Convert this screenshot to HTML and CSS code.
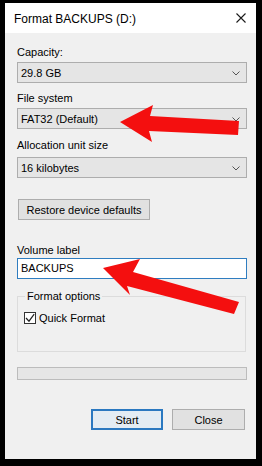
FILE: index.html
```html
<!DOCTYPE html>
<html>
<head>
<meta charset="utf-8">
<link rel="stylesheet" href="styles.css">
</head>
<body>
<div class="dialog">
  <div class="titlebar">
    <span class="title">Format BACKUPS (D:)</span>
    <svg class="close" width="10" height="10" viewBox="0 0 10 10"><path d="M0.5 0.5 L9.5 9.5 M9.5 0.5 L0.5 9.5" stroke="#1a1a1a" stroke-width="1.1" fill="none"/></svg>
  </div>
  <div class="content">
    <div class="label l-cap">Capacity:</div>
    <div class="combo"><span>29.8 GB</span><svg width="8" height="5" viewBox="0 0 8 5"><path d="M0.5 0.5 L4 4 L7.5 0.5" stroke="#555" fill="none"/></svg></div>
    <div class="label l-fs">File system</div>
    <div class="combo"><span>FAT32 (Default)</span><svg width="8" height="5" viewBox="0 0 8 5"><path d="M0.5 0.5 L4 4 L7.5 0.5" stroke="#555" fill="none"/></svg></div>
    <div class="label l-alloc">Allocation unit size</div>
    <div class="combo c-alloc"><span>16 kilobytes</span><svg width="8" height="5" viewBox="0 0 8 5"><path d="M0.5 0.5 L4 4 L7.5 0.5" stroke="#555" fill="none"/></svg></div>
    <div class="btn restore">Restore device defaults</div>
    <div class="label l-vol">Volume label</div>
    <div class="textbox">BACKUPS</div>
    <fieldset class="group">
      <legend>Format options</legend>
      <div class="checkrow">
        <span class="checkbox"><svg width="10" height="10" viewBox="0 0 10 10"><path d="M1 5 L4 8.2 L9.2 1.2" stroke="#222" stroke-width="1.2" fill="none"/></svg></span>
        <span>Quick Format</span>
      </div>
    </fieldset>
    <div class="progress"></div>
    <div class="actions">
      <div class="btn start">Start</div>
      <div class="btn close-btn">Close</div>
    </div>
  </div>
</div>
<svg class="arrows" width="262" height="466" viewBox="0 0 262 466">
  <polygon points="120,122 153,105 150,116 239,121 238,135 149,131 152,142" fill="#f40f0f"/>
  <polygon points="103,268 140,259 133,272 239,302 234,314 127,286 130,295" fill="#f40f0f"/>
</svg>
</body>
</html>
```
FILE: styles.css
```css
html, body {
  margin: 0;
  padding: 0;
}
body {
  background: #000;
  width: 262px;
  height: 466px;
  overflow: hidden;
  position: relative;
  font-family: "Liberation Sans", Arial, sans-serif;
  font-size: 11px;
  color: #000;
}
.dialog {
  margin: 3px 6px 0 5px;
  width: 251px;
  height: 456px;
  background: #f0f0f0;
  display: flex;
  flex-direction: column;
}
.titlebar {
  height: 30px;
  background: #fff;
  display: flex;
  align-items: center;
  justify-content: space-between;
  padding: 1px 10px 0 9px;
  box-sizing: border-box;
}
.title {
  font-size: 12px;
  color: #000;
}
.close {
  display: block;
  margin-top: -1px;
}
.content {
  padding: 0 9px 0 12px;
  display: flex;
  flex-direction: column;
}
.label {
  height: 15px;
  line-height: 15px;
}
.l-cap { margin-top: 12px; }
.l-fs { margin-top: 8px; }
.l-alloc { margin-top: 9px; }
.l-vol { margin-top: 23px; }
.combo {
  margin-top: 2px;
  height: 21px;
  box-sizing: border-box;
  border: 1px solid #adadad;
  background: #e5e5e5;
  display: flex;
  align-items: center;
  justify-content: space-between;
  padding: 0 6px 0 3px;
}
.combo svg { display: block; margin-top: 1px; }
.c-alloc { margin-top: 4px; }
.btn {
  height: 21px;
  box-sizing: border-box;
  border: 1px solid #adadad;
  background: #e1e1e1;
  display: flex;
  align-items: center;
  justify-content: center;
}
.restore {
  margin-top: 21px;
  margin-left: 1px;
  width: 132px;
}
.textbox {
  height: 21px;
  box-sizing: border-box;
  border: 1px solid #2f7dc0;
  background: #fff;
  padding: 0 3px;
  line-height: 19px;
}
.group {
  margin: 10px 1px 0 0;
  padding: 6px 0 26px 6px;
  border: 1px solid #dcdcdc;
  min-width: 0;
}
.group legend {
  padding: 0 2px;
  margin-left: 1px;
  line-height: 15px;
  height: 15px;
}
.checkrow {
  display: flex;
  align-items: center;
  height: 15px;
  gap: 3px;
}
.checkbox {
  width: 12px;
  height: 12px;
  box-sizing: border-box;
  border: 1px solid #333;
  background: #fff;
  display: flex;
  align-items: center;
  justify-content: center;
}
.checkbox svg { display: block; }
.progress {
  margin-top: 15px;
  height: 13px;
  box-sizing: border-box;
  border: 1px solid #bcbcbc;
  background: #e6e6e6;
}
.actions {
  margin-top: 29px;
  display: flex;
  justify-content: flex-end;
  gap: 9px;
  padding-right: 2px;
}
.start {
  width: 72px;
  border: 2px solid #2a78c0;
  background: #e3ecf3;
}
.close-btn {
  width: 73px;
}
.arrows {
  position: absolute;
  left: 0;
  top: 0;
  pointer-events: none;
}
```
